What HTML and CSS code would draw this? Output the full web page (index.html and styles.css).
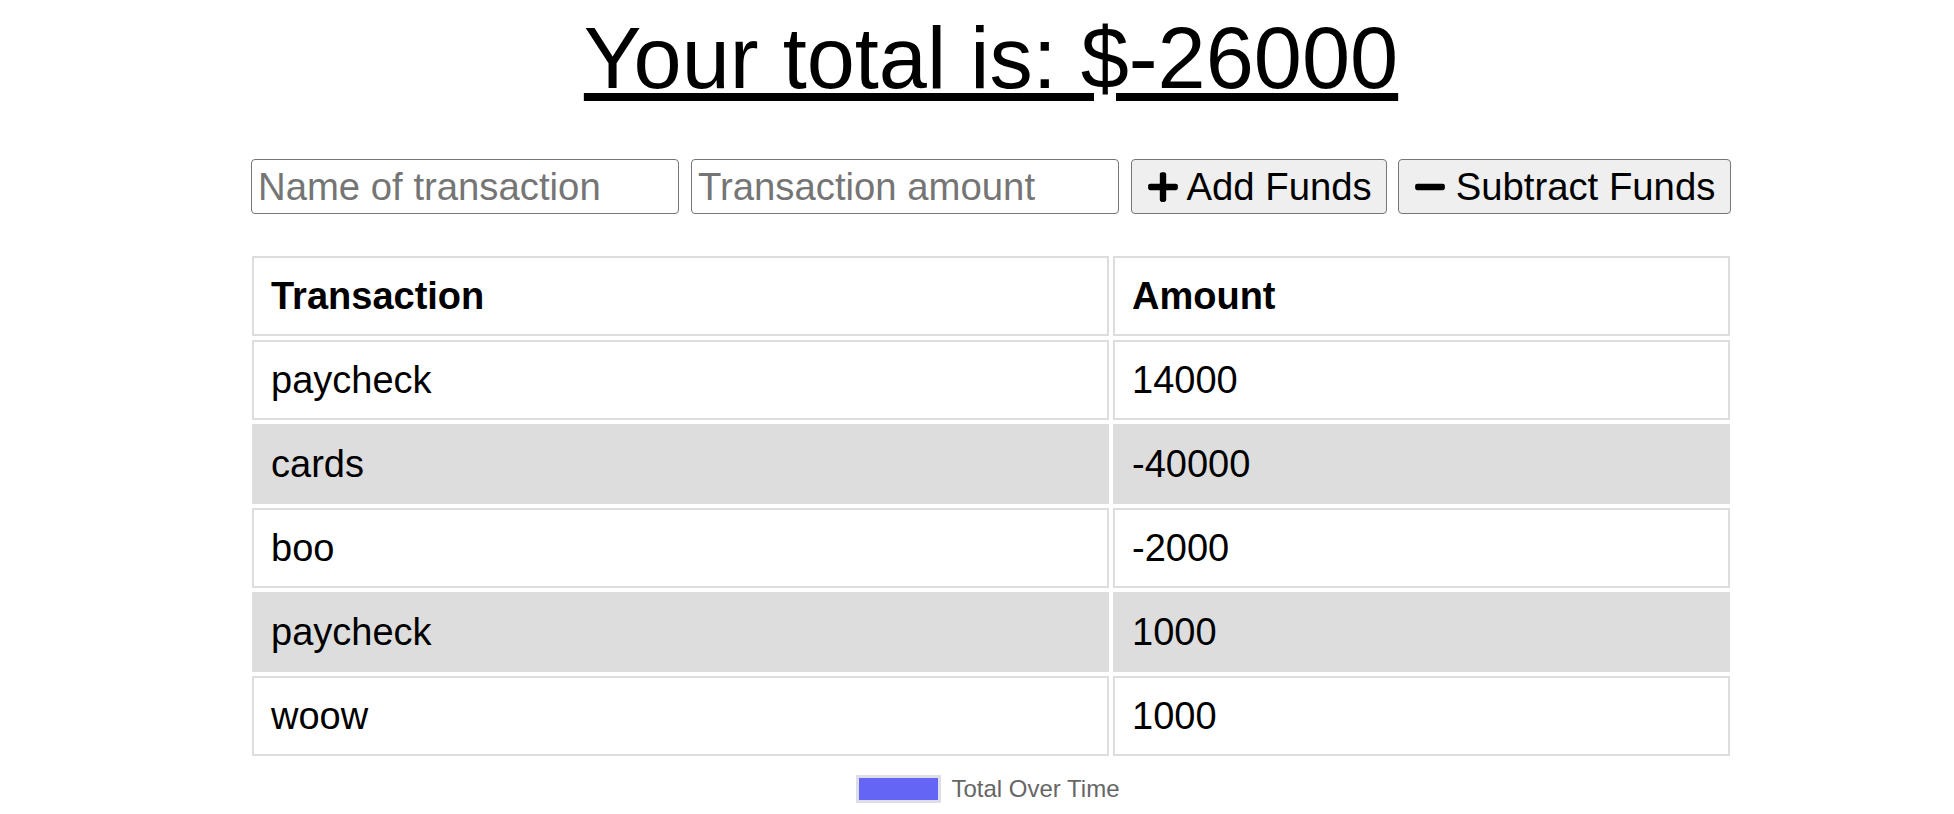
FILE: index.html
```html
<!DOCTYPE html>
<html lang="en">
<head>
<meta charset="utf-8">
<title>Budget Tracker</title>
<link rel="stylesheet" href="styles.css">
</head>
<body>
<div class="page">
  <h1 class="total">Your total is: $-26000</h1>
  <form class="entry">
    <input class="field" type="text" placeholder="Name of transaction">
    <input class="field" type="number" placeholder="Transaction amount">
    <button class="btn btn-add" type="button"><svg class="icon" viewBox="0 0 448 512"><path d="M416 208H272V64c0-17.670-14.330-32-32-32h-32c-17.670 0-32 14.330-32 32v144H32c-17.670 0-32 14.330-32 32v32c0 17.670 14.330 32 32 32h144v144c0 17.670 14.330 32 32 32h32c17.670 0 32-14.330 32-32V304h144c17.670 0 32-14.330 32-32v-32c0-17.670-14.330-32-32-32z"/></svg> Add Funds</button>
    <button class="btn btn-sub" type="button"><svg class="icon" viewBox="0 0 448 512"><path d="M416 208H32c-17.670 0-32 14.330-32 32v32c0 17.670 14.330 32 32 32h384c17.670 0 32-14.330 32-32v-32c0-17.670-14.330-32-32-32z"/></svg> Subtract Funds</button>
  </form>
  <table class="ledger">
    <thead>
      <tr><th class="col-name">Transaction</th><th>Amount</th></tr>
    </thead>
    <tbody>
      <tr><td>paycheck</td><td>14000</td></tr>
      <tr><td>cards</td><td>-40000</td></tr>
      <tr><td>boo</td><td>-2000</td></tr>
      <tr><td>paycheck</td><td>1000</td></tr>
      <tr><td>woow</td><td>1000</td></tr>
    </tbody>
  </table>
  <div class="legend">
    <span class="swatch"></span>
    <span class="legend-label">Total Over Time</span>
  </div>
</div>
</body>
</html>
```
FILE: styles.css
```css
html, body {
  margin: 0;
  background: #fff;
}
body {
  padding: 9px 0 0 28px;
  font-family: "Liberation Sans", Arial, sans-serif;
  color: #000;
}
.page {
  width: 1480px;
  margin: 0 auto;
}
.total {
  margin: 0;
  font-size: 86.5px;
  font-weight: normal;
  line-height: normal;
  text-align: center;
  text-decoration: underline;
}
.entry {
  display: flex;
  gap: 12px;
  margin-top: 51px;
}
.field {
  box-sizing: border-box;
  width: 428px;
  height: 55px;
  padding: 2px 6px;
  border: 1px solid #767676;
  border-radius: 4px;
  font-family: "Liberation Sans", Arial, sans-serif;
  font-size: 38.3px;
  color: #000;
  background: #fff;
  margin: 0;
}
.field::placeholder {
  color: #757575;
}
.field::-webkit-outer-spin-button,
.field::-webkit-inner-spin-button {
  -webkit-appearance: none;
  margin: 0;
}
.btn {
  box-sizing: border-box;
  height: 55px;
  margin: 0;
  padding: 0 0 0 16px;
  border: 1px solid #767676;
  border-radius: 4px;
  background: #efefef;
  font-family: "Liberation Sans", Arial, sans-serif;
  font-size: 38.3px;
  color: #000;
  display: flex;
  align-items: center;
  white-space: pre;
}
.btn-add {
  width: 256px;
}
.btn-sub {
  width: 333px;
  margin-left: -1px;
}
.icon {
  width: 30px;
  height: 34px;
  fill: #000;
}
.ledger {
  margin: 38px 0 0 -3px;
  width: calc(100% + 6px);
  border-collapse: separate;
  border-spacing: 4px;
  table-layout: fixed;
  font-size: 38px;
}
.ledger th,
.ledger td {
  box-sizing: border-box;
  border: 2px solid #dddddd;
  padding: 16px 17px;
  text-align: left;
  line-height: 44px;
}
.ledger th {
  font-weight: bold;
}
.ledger .col-name {
  width: 857px;
}
.ledger tbody tr:nth-child(even) td {
  background: #dddddd;
}
.legend {
  display: flex;
  justify-content: center;
  align-items: center;
  gap: 10px;
  margin-top: 15px;
  padding-right: 6px;
}
.swatch {
  box-sizing: border-box;
  width: 85px;
  height: 28px;
  background: #6464f5;
  border: 3px solid #dedee8;
}
.legend-label {
  font-size: 24px;
  color: #666;
}
```
